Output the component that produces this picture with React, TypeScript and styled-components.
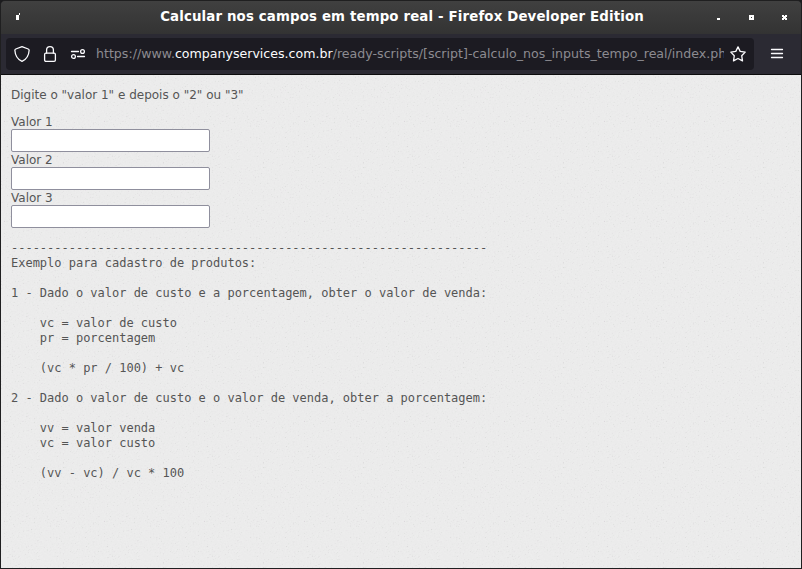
import React from "react";
import styled, { createGlobalStyle } from "styled-components";

const paper = encodeURIComponent(
  `<svg xmlns="http://www.w3.org/2000/svg" width="100" height="100"><filter id="n" x="0" y="0" width="100%" height="100%" color-interpolation-filters="sRGB"><feTurbulence type="fractalNoise" baseFrequency="0.63" numOctaves="2" seed="4" stitchTiles="stitch"/><feColorMatrix values="0.9 0.1 0 0 0 0.9 0 0.1 0 0 0.9 0.1 0 0 0 0 0 0 0 1"/><feComponentTransfer><feFuncR type="table" tableValues="0.78 0.84 0.885 0.917 0.924 0.926 0.93 0.93 0.93 0.93"/><feFuncG type="table" tableValues="0.78 0.84 0.885 0.917 0.924 0.926 0.93 0.93 0.93 0.93"/><feFuncB type="table" tableValues="0.78 0.84 0.885 0.917 0.924 0.926 0.93 0.93 0.93 0.93"/></feComponentTransfer></filter><rect width="100" height="100" filter="url(#n)"/></svg>`
);

const GlobalStyle = createGlobalStyle`
  * { box-sizing: border-box; }
  body { margin: 0; background: #1c1c1e; overflow: hidden; }
`;

const Window = styled.div`
  width: 802px;
  height: 569px;
  display: flex;
  flex-direction: column;
  border: 1px solid #1f1f20;
  border-radius: 5px 5px 0 0;
  overflow: hidden;
  background: #2b2a33;
  font-family: "DejaVu Sans", sans-serif;
`;

const TitleBar = styled.header`
  height: 33px;
  flex: none;
  display: grid;
  grid-template-columns: 100px 1fr 100px;
  align-items: center;
  background: linear-gradient(#404040, #333333);
`;

const Title = styled.h1`
  margin: 0;
  padding: 0 0 3px 2px;
  text-align: center;
  white-space: nowrap;
  color: #fff;
  font-size: 13.333px;
  letter-spacing: 0.15px;
  line-height: 17px;
  font-weight: bold;
`;

const TitleGlyph = styled.svg`
  display: block;
  width: 100px;
  height: 33px;
  fill: #fff;
`;

const Toolbar = styled.nav`
  height: 41px;
  flex: none;
  display: flex;
  padding: 4px 5px;
  background: #2b2a33;
  border-bottom: 1px solid #0c0c0d;
`;

const AddressBar = styled.div`
  width: 748px;
  height: 32px;
  display: flex;
  align-items: center;
  padding: 0 8px;
  border-radius: 4px;
  background: #1c1b22;
`;

const Icon = styled.svg<{ $gap?: number }>`
  display: block;
  flex: none;
  width: 16px;
  height: 16px;
  margin-right: ${(p) => p.$gap ?? 0}px;
  fill: none;
  stroke: #fbfbfe;
  stroke-width: 1.3;
  stroke-linejoin: round;
  stroke-linecap: round;
`;

const Url = styled.div`
  width: 628px;
  margin-right: 6px;
  overflow: hidden;
  white-space: nowrap;
  font-size: 12.6px;
  line-height: 20px;
  color: #8c8b91;
`;

const Host = styled.span`
  color: #fbfbfe;
`;

const MenuButton = styled.button`
  width: 32px;
  height: 32px;
  margin-left: 7px;
  padding: 8px;
  border: 0;
  background: none;
`;

const Page = styled.main`
  flex: 1;
  padding: 13px 10px 12px;
  color: #555;
  font-size: 12px;
  line-height: 15px;
  background: #ebebeb url("data:image/svg+xml,${paper}");
`;

const Intro = styled.p`
  margin: 0 0 12px;
`;

const Field = styled.label`
  display: block;
  width: 199px;
  height: 38px;
`;

const Input = styled.input`
  display: block;
  width: 199px;
  height: 23px;
  margin-top: -1px;
  border: 1px solid #8f8f9d;
  border-radius: 2px;
  background: #fff;
  outline: none;
`;

const Notes = styled.pre`
  margin: 12px 0 0;
  font: 12px/15px "DejaVu Sans Mono", monospace;
  letter-spacing: -0.01px;
`;

const notes = `${"-".repeat(66)}
Exemplo para cadastro de produtos:

1 - Dado o valor de custo e a porcentagem, obter o valor de venda:

    vc = valor de custo
    pr = porcentagem

    (vc * pr / 100) + vc

2 - Dado o valor de custo e o valor de venda, obter a porcentagem:

    vv = valor venda
    vc = valor custo

    (vv - vc) / vc * 100`;

export default function App() {
  return (
    <>
      <GlobalStyle />
      <Window>
        <TitleBar>
          <TitleGlyph viewBox="0 0 100 33" shapeRendering="crispEdges">
            <path d="M15 14h3v5h-3zM18 12h1v2h-1z" />
          </TitleGlyph>
          <Title>Calcular nos campos em tempo real - Firefox Developer Edition</Title>
          <TitleGlyph viewBox="0 0 100 33" shapeRendering="crispEdges">
            <path d="M16 17h3v2h-3z" />
            <path fillRule="evenodd" d="M48 14h5v5h-5zM50 16v1h1v-1z" />
            <path d="M81 14h2v1h1v-1h2v2h-1v1h1v2h-2v-1h-1v1h-2v-2h1v-1h-1z" />
          </TitleGlyph>
        </TitleBar>
        <Toolbar>
          <AddressBar>
            <Icon $gap={12} viewBox="0 0 16 16">
              <path d="M8 .7 14.2 3c.7.3 1 .8.9 1.5C14.8 9.8 12.4 13.4 8 15.4 3.6 13.4 1.2 9.8.9 4.5.8 3.8 1.1 3.3 1.8 3z" />
            </Icon>
            <Icon $gap={12} viewBox="0 0 16 16">
              <rect x="2.6" y="7.1" width="10.8" height="8.2" rx="1.3" />
              <path d="M4.6 7V4.1a3.4 3.4 0 0 1 6.8 0V7" />
            </Icon>
            <Icon $gap={10} viewBox="0 0 16 16">
              <path d="M1.5 5.5h7M7.5 10.5h7" />
              <circle cx="12.5" cy="5.5" r="1.9" />
              <circle cx="3.5" cy="10.5" r="1.9" />
            </Icon>
            <Url>
              https://www.<Host>companyservices.com.br</Host>
              /ready-scripts/[script]-calculo_nos_inputs_tempo_real/index.php
            </Url>
            <Icon viewBox="0 0 16 16">
              <path d="M8 .9 10.2 5.4 15.2 6.1 11.7 9.7 12.5 14.9 8 12.5 3.5 14.9 4.3 9.7.8 6.1 5.8 5.4z" />
            </Icon>
          </AddressBar>
          <MenuButton aria-label="Menu">
            <Icon viewBox="0 0 16 16">
              <path d="M2.5 3.5h11M2.5 7.5h11M2.5 11.5h11" />
            </Icon>
          </MenuButton>
        </Toolbar>
        <Page>
          <Intro>Digite o "valor 1" e depois o "2" ou "3"</Intro>
          {[1, 2, 3].map((n) => (
            <Field key={n}>
              Valor {n}
              <Input type="text" />
            </Field>
          ))}
          <Notes>{notes}</Notes>
        </Page>
      </Window>
    </>
  );
}
